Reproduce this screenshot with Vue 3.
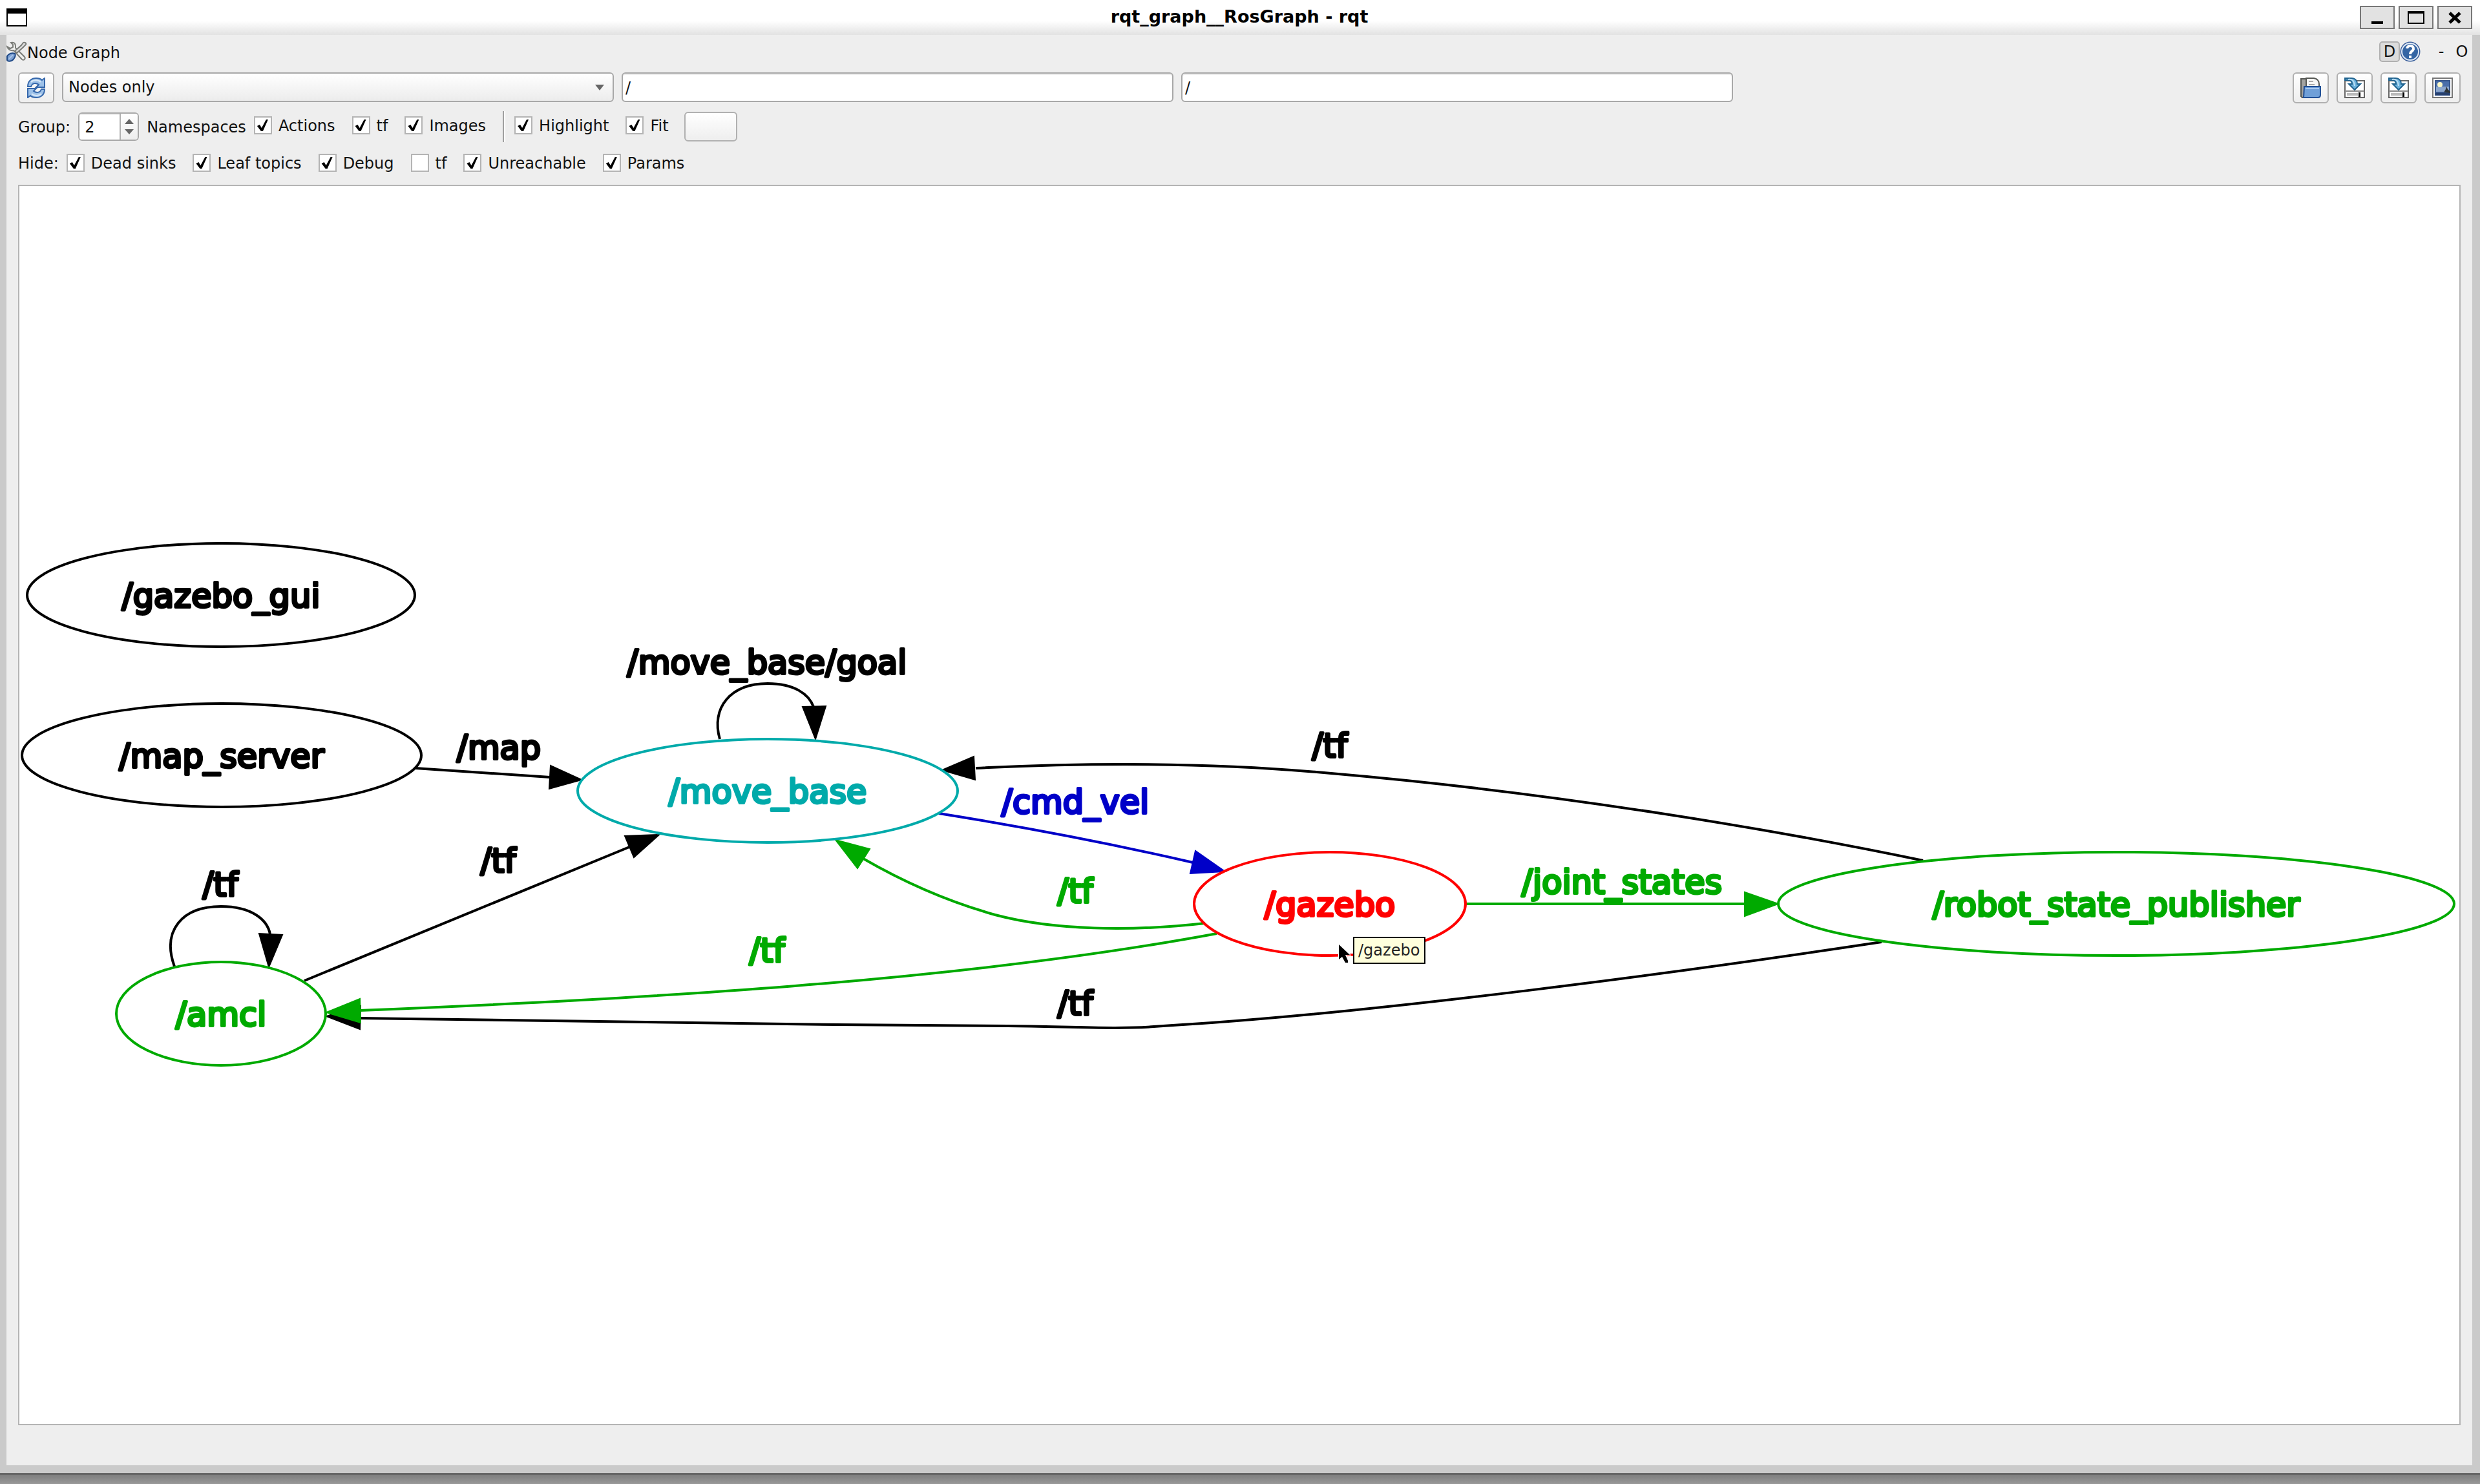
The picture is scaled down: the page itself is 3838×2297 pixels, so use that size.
<script setup>
import { ref } from 'vue'

const graphMode = ref('Nodes only')
const nodeFilter = ref('/')
const topicFilter = ref('/')
const depth = ref('2')

const groupOptions = ref([
  { id: 'group-actions', label: 'Actions', on: true },
  { id: 'group-tf', label: 'tf', on: true },
  { id: 'group-images', label: 'Images', on: true },
])
const viewOptions = ref([
  { id: 'view-highlight', label: 'Highlight', on: true },
  { id: 'view-fit', label: 'Fit', on: true },
])
const hideOptions = ref([
  { id: 'hide-dead', label: 'Dead sinks', on: true },
  { id: 'hide-leaf', label: 'Leaf topics', on: true },
  { id: 'hide-debug', label: 'Debug', on: true },
  { id: 'hide-tf', label: 'tf', on: false },
  { id: 'hide-unreachable', label: 'Unreachable', on: true },
  { id: 'hide-params', label: 'Params', on: true },
])

const nodes = [
  { name: '/gazebo_gui', x: 342, y: 921, rx: 300, tone: 'plain' },
  { name: '/map_server', x: 343, y: 1169, rx: 309, tone: 'plain' },
  { name: '/amcl', x: 342, y: 1569, rx: 162, tone: 'target' },
  { name: '/move_base', x: 1188, y: 1224, rx: 294, tone: 'both' },
  { name: '/gazebo', x: 2058, y: 1399, rx: 210, tone: 'picked' },
  { name: '/robot_state_publisher', x: 3275, y: 1399, rx: 523, tone: 'target' },
]

const edges = [
  { topic: '/map', tone: 'plain', x: 772, y: 1175, line: 'M643 1189L851 1203', head: '900,1207 852,1185 850,1221' },
  { topic: '/tf', tone: 'plain', x: 771, y: 1350, line: 'M471 1518L974 1311', head: '1020,1292 967,1294 981,1327' },
  { topic: '/tf', tone: 'plain', x: 341, y: 1387, line: 'M270 1496C250 1440 282 1403 342 1403C390 1403 414 1424 418 1446', head: '416,1497 401,1445 437,1447' },
  { topic: '/move_base/goal', tone: 'plain', x: 1187, y: 1043, line: 'M1114 1144C1100 1096 1130 1058 1188 1058C1230 1058 1252 1075 1259 1094', head: '1262,1144 1242,1094 1278,1093' },
  { topic: '/tf', tone: 'plain', x: 2058, y: 1172, line: 'M2976 1332C2760 1287 2420 1228 2060 1197C1880 1180 1690 1180 1510 1189', head: '1458,1192 1507,1171 1509,1207' },
  { topic: '/tf', tone: 'plain', x: 1664, y: 1571, line: 'M2912 1458C2620 1502 2130 1569 1800 1588C1730 1594 1660 1589 1560 1588C1220 1586 860 1582 558 1576', head: '505,1573 558,1557 557,1593' },
  { topic: '/cmd_vel', tone: 'outgoing', x: 1664, y: 1259, line: 'M1453 1259Q1660 1292 1846 1335', head: '1896,1349 1850,1317 1842,1352' },
  { topic: '/tf', tone: 'target', x: 1664, y: 1397, line: 'M1865 1429C1750 1442 1630 1440 1540 1416C1465 1395 1400 1366 1336 1329', head: '1293,1300 1346,1314 1327,1344' },
  { topic: '/tf', tone: 'target', x: 1187, y: 1489, line: 'M1883 1445C1480 1520 980 1547 557 1564', head: '505,1567 557,1546 558,1583' },
  { topic: '/joint_states', tone: 'target', x: 2510, y: 1383, line: 'M2269 1399L2700 1399', head: '2752,1399 2700,1381 2700,1418' },
]
</script>

<template>
  <div class="desktop">
    <div class="window">
      <header class="titlebar">
        <svg class="app-icon" viewBox="0 0 32 28" aria-hidden="true">
          <rect x="1" y="1" width="30" height="26" fill="#fff" stroke="#000" stroke-width="2" />
          <rect width="32" height="8" />
        </svg>
        <h1>rqt_graph__RosGraph - rqt</h1>
        <div class="frame-buttons">
          <button type="button" aria-label="Minimize">
            <svg viewBox="0 0 50 32"><rect x="16" y="22" width="18" height="4" /></svg>
          </button>
          <button type="button" aria-label="Maximize">
            <svg viewBox="0 0 50 32">
              <rect x="13" y="7" width="24" height="18" fill="none" stroke="#000" stroke-width="2" />
              <rect x="12" y="6" width="26" height="4" />
            </svg>
          </button>
          <button type="button" aria-label="Close">
            <svg viewBox="0 0 50 32"><path d="M17 9l16 15M33 9L17 24" stroke="#000" stroke-width="5" /></svg>
          </button>
        </div>
      </header>

      <main class="body">
        <div class="dock-title">
          <svg class="tools" viewBox="0 0 32 32" aria-hidden="true">
            <path d="M1 8l5 3 4-2V5L7 2c4-1 7 1 7 5v3l14 14c2 3-1 6-4 4L11 14c-5 1-9-2-10-6z" fill="#f0f0ee" stroke="#7c7e7a" stroke-width="2" />
            <path d="M23 6l3-4c3-1 5 1 4 3l-4 4-10 9-3-3z" fill="#ddd" stroke="#7c7e7a" stroke-width="2" />
            <path d="M1 23c2-4 8-6 12-4 2 3-1 9-5 11-3 1-6 1-7-1z" fill="#7b9fd2" stroke="#204a87" stroke-width="2" />
            <path d="M4 27l6-6" stroke="#a9c4e8" stroke-width="2" />
          </svg>
          <span class="dock-name">Node Graph</span>
          <div class="dock-buttons">
            <button type="button" class="dock-d">D</button>
            <button type="button" class="dock-help" aria-label="Help">
              <svg viewBox="0 0 32 32">
                <circle cx="16" cy="16" r="14" fill="#3465a4" stroke="#3a5f9b" stroke-width="3" />
                <circle cx="16" cy="16" r="13" fill="none" stroke="#dfe8f5" stroke-width="2" />
                <path d="M11 11c1-6 11-5 10 1-1 4-5 3-5 8" fill="none" stroke="#fff" stroke-width="4" />
                <rect x="14" y="22" width="4" height="4" fill="#fff" />
              </svg>
            </button>
            <button type="button" class="dock-text">-</button>
            <button type="button" class="dock-text">O</button>
          </div>
        </div>

        <div class="row">
          <button type="button" class="push" aria-label="Refresh">
            <svg class="icon" viewBox="0 0 32 32">
              <g id="refresh-half" fill="#9dc1e8" stroke="#3567ab" stroke-width="2">
                <path d="M3 14C3 5 9 1 16 1c4 0 7 1 9 3l4-3v14H16l4-4c-4-3-10-3-12 3z" />
                <path d="M8 7c4-4 11-4 15 0" fill="none" stroke="#d7e7f7" />
              </g>
              <use href="#refresh-half" transform="rotate(180 16 16)" />
            </svg>
          </button>
          <div class="fields">
            <div class="combo">
              <select v-model="graphMode" aria-label="Graph type">
                <option>Nodes only</option>
                <option>Nodes/Topics (active)</option>
                <option>Nodes/Topics (all)</option>
              </select>
              <svg class="arrow" viewBox="0 0 14 9" aria-hidden="true"><path d="M0 0h14L7 9z" fill="#666" /></svg>
            </div>
            <input v-model="nodeFilter" type="text" class="edit" aria-label="Namespace filter">
            <input v-model="topicFilter" type="text" class="edit" aria-label="Topic filter">
          </div>
          <div class="file-buttons">
            <button type="button" class="push" aria-label="Load graph">
              <svg class="icon" viewBox="0 0 32 32">
                <path d="M1 2h9v29H3l-2-2z" fill="#a3a3a0" stroke="#555753" stroke-width="2" />
                <path d="M9 18V1h12c5 1 8 4 8 9v8z" fill="#f6f6f5" stroke="#555753" stroke-width="2" />
                <path d="M13 6h7M13 11h9" stroke="#aaa" stroke-width="2" />
                <path d="M6 14h25v13c0 3-2 4-4 4H5z" fill="#6f9fd8" stroke="#204f96" stroke-width="2" />
                <path d="M8 17h21" stroke="#a8c8ee" stroke-width="2" />
              </svg>
            </button>
            <button v-for="format in ['DOT', 'SVG']" :key="format" type="button" class="push" :aria-label="'Save as ' + format">
              <svg class="icon" viewBox="0 0 32 32">
                <rect x="1" y="5" width="30" height="26" fill="#fff" stroke="#666" stroke-width="2" />
                <path d="M1 21h30" stroke="#888" stroke-width="2" />
                <rect x="4" y="24" width="17" height="4" fill="#bbb" />
                <rect x="22" y="23" width="3" height="7" />
                <path d="M1 1h10c6 0 9 4 9 9h5l-9 9-9-9h5c0-4-3-6-7-6H1z" fill="#6cb2dd" stroke="#20638f" stroke-width="2" />
                <path d="M6 3c7-1 9 2 10 10" fill="none" stroke="#b9def3" stroke-width="2" />
              </svg>
            </button>
            <button type="button" class="push" aria-label="Save as image">
              <svg class="icon" viewBox="0 0 32 32">
                <rect x="1" y="1" width="30" height="30" fill="#fff" stroke="#777" stroke-width="2" />
                <rect x="4" y="4" width="24" height="24" fill="#35548a" />
                <rect x="6" y="6" width="20" height="8" fill="#4a6ea9" />
                <rect x="6" y="14" width="20" height="8" fill="#8ba6cd" />
                <circle cx="12" cy="11" r="4" fill="#fbf8c8" />
                <path d="M18 23l3-5 1-4 2 4 4 4v2z" fill="#2e3436" />
                <path d="M5 24h22v3H5z" fill="#27406e" />
              </svg>
            </button>
          </div>
        </div>

        <div class="row">
          <label class="caption" for="depth">Group:</label>
          <div class="spin">
            <input id="depth" v-model="depth" type="text" inputmode="numeric">
            <div class="steppers">
              <button type="button" aria-label="Increase"><svg viewBox="0 0 14 8"><path d="M0 8L7 0l7 8z" fill="#666" /></svg></button>
              <button type="button" aria-label="Decrease"><svg viewBox="0 0 14 8"><path d="M0 0h14L7 8z" fill="#666" /></svg></button>
            </div>
          </div>
          <span class="caption">Namespaces</span>
          <div class="checks raised">
            <label v-for="o in groupOptions" :key="o.id" :for="o.id">
              <input :id="o.id" v-model="o.on" type="checkbox"><span>{{ o.label }}</span>
            </label>
          </div>
          <div class="separator"></div>
          <div class="checks raised">
            <label v-for="o in viewOptions" :key="o.id" :for="o.id">
              <input :id="o.id" v-model="o.on" type="checkbox"><span>{{ o.label }}</span>
            </label>
          </div>
          <button type="button" class="push wide" aria-label="Fit in view"></button>
        </div>

        <div class="row last">
          <span class="caption">Hide:</span>
          <div class="checks">
            <label v-for="o in hideOptions" :key="o.id" :for="o.id">
              <input :id="o.id" v-model="o.on" type="checkbox"><span>{{ o.label }}</span>
            </label>
          </div>
        </div>

        <svg class="canvas" viewBox="30 288 3776 1916" role="img" aria-label="ROS node graph">
          <g v-for="(e, i) in edges" :key="'e' + i" :class="e.tone">
            <path class="line" :d="e.line" />
            <polygon class="head" :points="e.head" />
            <text :x="e.x" :y="e.y">{{ e.topic }}</text>
          </g>
          <g v-for="n in nodes" :key="n.name" :class="n.tone">
            <ellipse class="line" :cx="n.x" :cy="n.y" :rx="n.rx" ry="80" />
            <text :x="n.x" :y="n.y + 19">{{ n.name }}</text>
          </g>
          <path d="M2072 1462v23l5-4 5 9h4v-3l-4-9h7z" stroke="#fff" stroke-width="2" paint-order="stroke" />
          <rect x="2095" y="1451" width="110" height="40" fill="#ffffdc" stroke="#000" stroke-width="2" />
          <text class="tip" x="2102" y="1479">/gazebo</text>
        </svg>
      </main>
    </div>
    <div class="shadow"></div>
  </div>
</template>

<style>
body {
  margin: 0;
  background: #989898;
}
</style>

<style scoped>
.desktop {
  display: flex;
  flex-direction: column;
  min-height: 100vh;
  font: 24px/28px "DejaVu Sans", sans-serif;
  color: #111;
}
.desktop * {
  box-sizing: border-box;
}
button,
input,
select {
  margin: 0;
  padding: 0;
  font: inherit;
  color: inherit;
  appearance: none;
  border-radius: 0;
}
.shadow {
  flex: 1;
  border-top: 3px solid #666;
  background: linear-gradient(#7e7e7e, #999);
}
.titlebar {
  display: grid;
  grid-template-columns: 1fr auto 1fr;
  align-items: center;
  height: 54px;
  padding: 0 12px 0 10px;
  background: linear-gradient(#fff 60%, #e2e2e2);
}
.app-icon {
  width: 32px;
  height: 28px;
}
h1 {
  margin: 0;
  padding-bottom: 2px;
  font-size: 27px;
  line-height: 32px;
  font-weight: bold;
  color: #000;
}
.frame-buttons {
  display: flex;
  justify-content: flex-end;
  gap: 6px;
}
.frame-buttons button {
  width: 54px;
  height: 36px;
  border: 2px solid #777;
  background: #e2e2e2;
}
.frame-buttons svg {
  display: block;
  width: 50px;
  height: 32px;
}
.body {
  padding: 10px 18px 62px;
  border: solid #cacaca;
  border-width: 0 12px 12px 10px;
  background: #eee;
}
.dock-title {
  display: flex;
  align-items: center;
  height: 32px;
  margin: 0 -18px 16px;
}
.dock-name {
  padding-top: 4px;
}
.tools {
  width: 32px;
  height: 32px;
}
.dock-buttons {
  display: flex;
  margin-left: auto;
}
.dock-buttons button {
  width: 32px;
  height: 32px;
  border: 0;
  background: none;
}
.dock-buttons .dock-d {
  border: 2px solid #b0b0b0;
  border-radius: 5px;
  background: #dcdcdc;
}
.dock-buttons .dock-help {
  margin-right: 16px;
}
.dock-help svg {
  display: block;
}
.row {
  display: flex;
  align-items: center;
  gap: 12px;
  min-height: 48px;
  margin-bottom: 12px;
}
.row.last {
  min-height: 40px;
  margin-bottom: 14px;
}
.push {
  display: grid;
  place-items: center;
  width: 56px;
  height: 48px;
  border: 2px solid #b0b0b0;
  border-radius: 6px;
  background: linear-gradient(#fff, #eee);
}
.push.wide {
  width: 82px;
  height: 46px;
  margin-left: 12px;
}
.icon {
  width: 32px;
  height: 32px;
}
.fields {
  display: grid;
  grid-template-columns: repeat(4, 1fr);
  flex: 1;
  gap: 12px;
  align-self: flex-start;
}
.file-buttons {
  display: flex;
  gap: 12px;
  margin-left: -12px;
}
.combo {
  display: grid;
  align-items: center;
}
.combo select,
.combo .arrow {
  grid-area: 1 / 1;
}
.combo select {
  width: 100%;
  height: 46px;
  padding: 0 8px;
  border: 2px solid #a8a8a8;
  border-radius: 6px;
  background: linear-gradient(#fff, #ececec);
}
.combo .arrow {
  justify-self: end;
  width: 14px;
  height: 9px;
  margin-right: 15px;
  pointer-events: none;
}
.edit {
  width: 100%;
  height: 46px;
  padding: 2px 4px 0;
  border: 2px solid #a8a8a8;
  border-radius: 6px;
  background: #fff;
  box-shadow: inset 0 2px #eee;
}
.caption {
  padding-top: 2px;
}
.spin {
  display: flex;
  width: 94px;
  height: 44px;
  border: 2px solid #a8a8a8;
  border-radius: 6px;
  background: #fff;
  overflow: hidden;
}
.spin input {
  flex: 1;
  min-width: 0;
  padding: 2px 8px 0;
  border: 0;
  background: #fff;
  box-shadow: inset 0 2px #eee;
}
.steppers {
  display: flex;
  flex-direction: column;
  justify-content: center;
  gap: 8px;
  width: 28px;
  border-left: 2px solid #b0b0b0;
  background: linear-gradient(#fff, #eee);
}
.steppers button {
  display: grid;
  place-items: center;
  height: 8px;
  border: 0;
  background: none;
}
.steppers svg {
  width: 14px;
  height: 8px;
}
.checks {
  display: flex;
  gap: 26px;
}
.checks.raised {
  padding-bottom: 4px;
}
.checks label {
  display: flex;
  align-items: center;
  gap: 10px;
  height: 28px;
}
.checks span {
  padding-top: 2px;
}
.checks input {
  display: grid;
  width: 28px;
  height: 28px;
  border: 2px solid #b4b4b4;
  background: #fff;
}
.checks input:checked::before {
  content: "";
  width: 24px;
  height: 24px;
  background: #000;
  clip-path: polygon(3px 13px, 7px 11px, 10px 16px, 17px 3px, 20px 3px, 12px 21px, 9px 21px);
}
.separator {
  align-self: stretch;
  width: 4px;
  margin: 0 2px 0 14px;
  border-left: 2px solid #a0a0a0;
  background: #fff;
}
.canvas {
  display: block;
  width: 100%;
  border: 2px solid #b4b4b4;
  background: #fff;
}
.canvas text {
  font-size: 51px;
  text-anchor: middle;
  fill: currentColor;
  stroke: currentColor;
  stroke-width: 4px;
  stroke-linejoin: round;
}
.canvas .tip {
  font-size: 24px;
  text-anchor: start;
  fill: #222;
  stroke: none;
}
.line {
  fill: none;
  stroke: currentColor;
  stroke-width: 4px;
}
.head {
  fill: currentColor;
  stroke: currentColor;
  stroke-width: 2px;
}
.plain {
  color: #000;
}
.target {
  color: #00aa00;
}
.both {
  color: #00aaaa;
}
.picked {
  color: #ff0000;
}
.outgoing {
  color: #0000c8;
}
</style>
